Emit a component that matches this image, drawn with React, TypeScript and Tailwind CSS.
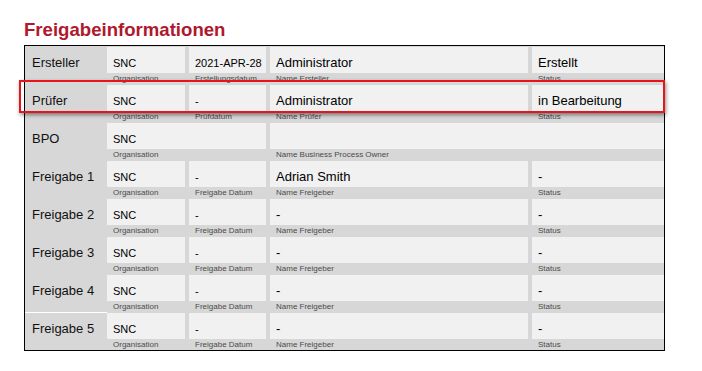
const font = { fontFamily: '"Liberation Sans", Arial, sans-serif' }

type Cell = { value: string; caption: string; span?: 'orgdate' | 'namestatus'; big?: boolean }

type Row = { label: string; cells: Cell[]; divider?: boolean }

const rows: Row[] = [
  {
    label: 'Ersteller',
    cells: [
      { value: 'SNC', caption: 'Organisation' },
      { value: '2021-APR-28', caption: 'Erstellungsdatum' },
      { value: 'Administrator', caption: 'Name Ersteller', big: true },
      { value: 'Erstellt', caption: 'Status', big: true },
    ],
  },
  {
    label: 'Prüfer',
    cells: [
      { value: 'SNC', caption: 'Organisation' },
      { value: '-', caption: 'Prüfdatum' },
      { value: 'Administrator', caption: 'Name Prüfer', big: true },
      { value: 'in Bearbeitung', caption: 'Status', big: true },
    ],
  },
  {
    label: 'BPO',
    cells: [
      { value: 'SNC', caption: 'Organisation', span: 'orgdate' },
      { value: '', caption: 'Name Business Process Owner', span: 'namestatus', big: true },
    ],
  },
  ...[1, 2, 3, 4, 5].map((n) => ({
    label: `Freigabe ${n}`,
    divider: n === 5,
    cells: [
      { value: 'SNC', caption: 'Organisation' },
      { value: '-', caption: 'Freigabe Datum' },
      { value: n === 1 ? 'Adrian Smith' : '-', caption: 'Name Freigeber', big: true },
      { value: '-', caption: 'Status', big: true },
    ],
  })),
]

const widths = ['w-[78px]', 'w-[77px]', 'w-[258px]', 'w-[132px]']

function CellBox({ cell, width }: { cell: Cell; width: string }) {
  return (
    <div className={`${width} flex flex-col`}>
      <div className="mt-px h-[26px] bg-[#f1f1f1] flex items-end pl-[6px] pb-[4px]">
        <span className={`${cell.big ? 'text-[13px]' : 'text-[11px]'} leading-none text-black`}>{cell.value}</span>
      </div>
      <div className="h-[11px] flex items-center pl-[6px] text-[8px] leading-none text-[#4b4b4b]">{cell.caption}</div>
    </div>
  )
}

function InfoRow({ row }: { row: Row }) {
  return (
    <div className="flex h-[38px] bg-[#d7d7d7]">
      <div className={`w-[82px] pl-[7px] pt-[10px] text-[13px] leading-none text-[#111] ${row.divider ? 'border-t border-white' : ''}`}>
        <span className={row.divider ? '-mt-px block' : ''}>{row.label}</span>
      </div>
      <div className="flex gap-[4px]">
        {row.cells.map((c, i) => {
          let w = widths[i]
          if (c.span === 'orgdate') w = 'w-[159px]'
          if (c.span === 'namestatus') w = 'w-[394px]'
          return <CellBox key={i} cell={c} width={w} />
        })}
      </div>
    </div>
  )
}

export default function App() {
  return (
    <div className="min-h-screen bg-white pl-[24px] pt-[19px]" style={font}>
      <h2 className="text-[18.6px] leading-[22px] font-bold text-[#b0182d]">Freigabeinformationen</h2>
      <div className="relative mt-[4px] w-[641px]">
        <div className="border border-black">
          {rows.map((r) => (
            <InfoRow key={r.label} row={r} />
          ))}
        </div>
        {/* highlight around the Prüfer row */}
        <div className="absolute left-[-5px] top-[35px] w-[646px] h-[33px] border-2 border-[#e8141b] shadow-[1px_2px_4px_rgba(0,0,0,0.45)]" />
      </div>
    </div>
  )
}
